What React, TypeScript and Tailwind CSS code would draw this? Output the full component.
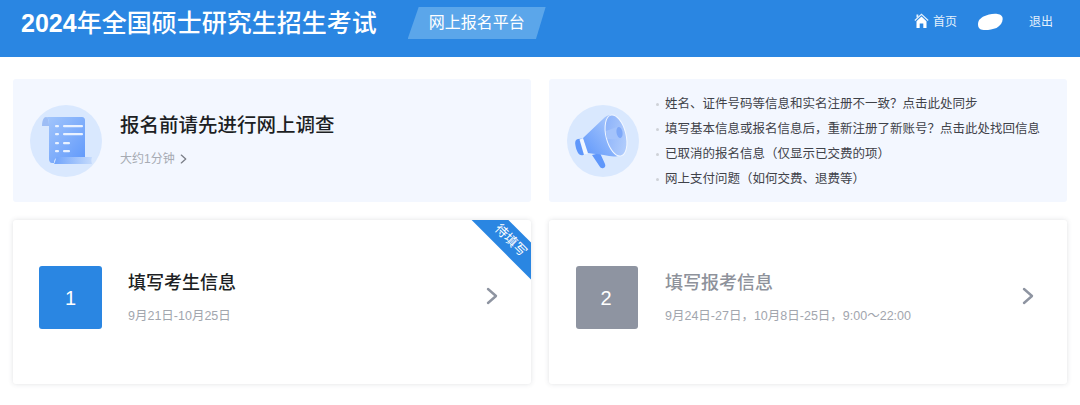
const FONT = "font-['Liberation_Sans','Noto_Sans_CJK_SC',sans-serif]";

function ScrollIcon() {
  return (
    <svg width="72" height="72" viewBox="0 0 72 72" className="shrink-0">
      <defs>
        <linearGradient id="sheet" x1="0" y1="0" x2="1" y2="1">
          <stop offset="0" stopColor="#a3c6fb" />
          <stop offset="1" stopColor="#5f98fb" />
        </linearGradient>
        <linearGradient id="foot" x1="0" y1="0" x2="1" y2="0">
          <stop offset="0" stopColor="#6fa3fb" />
          <stop offset="1" stopColor="#c4dafc" />
        </linearGradient>
      </defs>
      <circle cx="36" cy="36" r="36" fill="#d9e8fe" />
      <path d="M12 21c0-6 2-9 4-9s3 3 3 9z" fill="#9dbdf5" />
      <path d="M16 12h36c2 0 3 1.500 3 3v38H28c-3 0-4 2-4 5h-2c-2 0-3-2-3-4V20c0-4-1-8-3-8z" fill="url(#sheet)" />
      <path d="M27 52h35l-.5 2c-.3 1.500 0 3 .5 5H24c1.500-2 2-7 3-7z" fill="url(#foot)" />
      <g fill="#eaf2ff">
        <rect x="25" y="20" width="4" height="2.200" rx="1" />
        <rect x="33" y="20" width="20" height="2.200" rx="1" />
        <rect x="25" y="28" width="4" height="2.200" rx="1" />
        <rect x="33" y="28" width="20" height="2.200" rx="1" />
        <rect x="25" y="37" width="4" height="2.200" rx="1" />
        <rect x="33" y="37" width="7" height="2.200" rx="1" />
        <rect x="25" y="45" width="4" height="2.200" rx="1" />
        <rect x="33" y="45" width="7" height="2.200" rx="1" />
      </g>
    </svg>
  );
}

function MegaphoneIcon() {
  return (
    <svg width="72" height="72" viewBox="0 0 72 72" className="shrink-0">
      <defs>
        <linearGradient id="horn" x1="0" y1="1" x2="1" y2="0">
          <stop offset="0" stopColor="#5f97fb" />
          <stop offset="1" stopColor="#b4cffc" />
        </linearGradient>
        <linearGradient id="bell" x1="0" y1="0" x2="1" y2="1">
          <stop offset="0" stopColor="#86aefa" />
          <stop offset="1" stopColor="#b9d2fc" />
        </linearGradient>
      </defs>
      <circle cx="36" cy="36" r="36" fill="#d9e8fe" />
      <path d="M25 50l8-2 5 11c.8 2 0 3.500-1.500 4s-3 0-3.800-1.500z" fill="#5f97fb" />
      <path d="M11 34c-2 .5-3 2-2.800 4.500.3 3.500 1.300 7 3 9.800 1.200 1.700 3 2.400 5 1.700l4-1.500-4-15z" fill="#5f97fb" />
      <path d="M12.500 34.500l4-1.500 4.500 15.500-4 1.500z" fill="#f2f7ff" />
      <path d="M16 33L36 14c2.500-2.500 5-4 8-4l7 41c-3 .8-6 .5-9 0-7-1.500-14-2-21-3z" fill="url(#horn)" />
      <ellipse cx="49" cy="30.500" rx="10" ry="21" transform="rotate(-14 49 30.500)" fill="url(#bell)" stroke="#f2f7ff" strokeWidth="1" />
      <path d="M39 26l11-4c3-1 5 1 5.500 5 .5 4-1 7-3.500 7.500L40 34z" fill="#a4c3fb" />
      <ellipse cx="52.500" cy="27.500" rx="3" ry="5.500" transform="rotate(-10 52.500 27.500)" fill="#7ea8f8" />
    </svg>
  );
}

function HomeIcon() {
  return (
    <svg width="15" height="16" viewBox="0 0 15 16" className="mr-[4px] -translate-y-[1px]">
      <path d="M.8 7.500L7.500 1.200l6.700 6.300" fill="none" stroke="#e4f0fc" strokeWidth="1.200" />
      <path d="M7.500 3.500l5 4.800V15H9.300v-4.500H5.700V15H2.500V8.300z" fill="white" />
      <rect x="2.500" y="1.500" width="1.800" height="3" fill="#e4f0fc" />
    </svg>
  );
}

function Chevron({ className }: { className: string }) {
  return (
    <svg viewBox="0 0 12 18" fill="none" stroke="currentColor" strokeWidth="2.400" strokeLinecap="round" strokeLinejoin="round" className={className}>
      <path d="M2 2l8 7-8 7" />
    </svg>
  );
}

function HelpItem({ text }: { text: string }) {
  return (
    <li className="flex h-[25px] items-center gap-[6px]">
      <span className="h-[3px] w-[3px] rounded-full bg-[#cfd2d8]" />
      <span className="text-[12.500px] text-[#3f4249]">{text}</span>
    </li>
  );
}

function StepCard({
  step,
  title,
  date,
  active,
}: {
  step: number;
  title: string;
  date: string;
  active?: boolean;
}) {
  return (
    <div className={`relative flex h-[164px] w-[518px] items-start overflow-hidden rounded-[3px] bg-white pt-[46px] shadow-[0_0_5px_rgba(60,70,90,0.16)] ${active ? "pl-[26px]" : "pl-[27px]"}`}>
      <div className={`flex h-[63px] items-center justify-center rounded-[3px] text-[20px] text-white ${active ? "w-[63px] bg-[#2a86e2]" : "w-[62px] bg-[#8e94a1] pr-[2px]"}`}>
        {step}
      </div>
      <div className={active ? "ml-[26px]" : "ml-[27px]"}>
        <div className={`mt-[5px] text-[18px] leading-[24px] font-medium ${active ? "text-[#1d1f24]" : "text-[#8e929b]"}`}>{title}</div>
        <div className="mt-[13px] text-[12.500px] leading-[16px] text-[#a2a6ae]">{date}</div>
      </div>
      <Chevron className="absolute top-[67px] right-[33px] h-[18px] w-[12px] text-[#8e94a1]" />
      {active && (
        <div className="absolute top-[-30px] right-[-47px] flex h-[26px] w-[130px] translate-y-[40px] rotate-45 items-center justify-center bg-[#2a86e2] pr-[7px] text-[13px] text-white">
          待填写
        </div>
      )}
    </div>
  );
}

export default function App() {
  return (
    <div className={`h-[405px] w-[1080px] overflow-hidden bg-white ${FONT}`}>
      <header className="flex h-[57px] items-start bg-[#2a86e2] pl-[21px] text-white">
        <h1 className="mt-[7px] text-[25px] leading-[32px] font-medium">
          <span className="font-bold">2024</span>年全国硕士研究生招生考试
        </h1>
        <div className="mt-[7px] ml-[31px] flex h-[32px] w-[138px] items-center justify-center bg-[#5ba6ea] text-[16px] [clip-path:polygon(8%_0,100%_0,93%_100%,0_100%)]">
          网上报名平台
        </div>
        <nav className="ml-auto flex items-center pt-[13px] pr-[27px] text-[12px] leading-[16px] text-[#e4f0fc]">
          <HomeIcon />
          <span>首页</span>
          <svg width="26" height="18" viewBox="0 0 26 18" fill="white" className="mr-[26px] ml-[20px]">
            <path d="M1 11C1 6 6 3 12 1.500c5-1 12-1.500 13.500 3 .8 4-1.500 8-6 10.500C14 17 6 18 3 16c-1.500-1-2-3-2-5z" />
          </svg>
          <span>退出</span>
        </nav>
      </header>

      <main className="px-[13px] pt-[22px]">
        <div className="flex gap-[18px]">
          <section className="flex h-[123px] w-[518px] items-center rounded-[3px] bg-[#f3f7ff] pl-[17px]">
            <ScrollIcon />
            <div className="ml-[18px]">
              <div className="-mt-[3px] text-[19.500px] leading-[28px] font-medium text-[#1d1f24]">报名前请先进行网上调查</div>
              <div className="mt-[12px] flex items-center gap-[5px] text-[12px] leading-[16px] text-[#a7abb3]">
                大约1分钟
                <Chevron className="h-[10px] w-[7px] text-[#7b7f88]" />
              </div>
            </div>
          </section>
          <section className="flex h-[123px] w-[518px] items-center rounded-[3px] bg-[#f3f7ff] pl-[18px]">
            <MegaphoneIcon />
            <ul className="mt-[2px] ml-[17px]">
              <HelpItem text="姓名、证件号码等信息和实名注册不一致？点击此处同步" />
              <HelpItem text="填写基本信息或报名信息后，重新注册了新账号？点击此处找回信息" />
              <HelpItem text="已取消的报名信息（仅显示已交费的项）" />
              <HelpItem text="网上支付问题（如何交费、退费等）" />
            </ul>
          </section>
        </div>
        <div className="mt-[18px] flex gap-[18px]">
          <StepCard step={1} title="填写考生信息" date="9月21日-10月25日" active />
          <StepCard step={2} title="填写报考信息" date="9月24日-27日，10月8日-25日，9:00～22:00" />
        </div>
      </main>
    </div>
  );
}
